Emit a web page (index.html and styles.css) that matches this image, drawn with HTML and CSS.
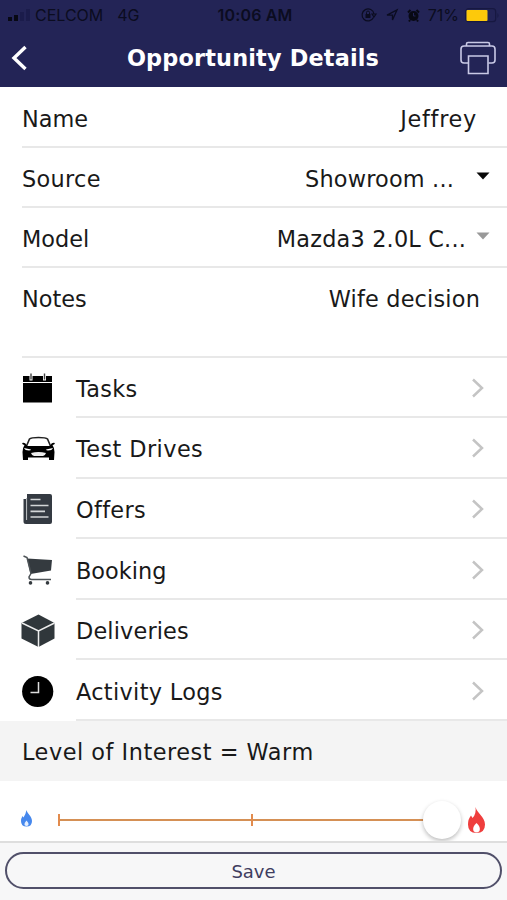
FILE: index.html
```html
<!DOCTYPE html>
<html lang="en">
<head>
<meta charset="utf-8">
<title>Opportunity Details</title>
<link rel="stylesheet" href="styles.css">
</head>
<body>
<header class="header">
  <div class="status">
    <div class="status-left">
      <svg width="22" height="12" viewBox="0 0 22 12"><path d="M0 8h4v4H0zM6 6h4v6H6z" fill="#080914"/><path d="M12 3h4v9h-4zM18 0h4v12h-4z" fill="#1b1c4b"/></svg>
      <span class="carrier">CELCOM</span><span class="network">4G</span>
    </div>
    <span class="time">10:06 AM</span>
    <div class="status-right">
      <svg width="16" height="14" viewBox="0 0 16 14"><path d="M12.500 9.500A6 6 0 1 1 13 6M11 6h4l-2 3z" fill="none" stroke="#0b0c20" stroke-width="1.200"/><path d="M4.500 6h5v4h-5z" fill="#0b0c20"/><path d="M5.500 6V4.500a1.500 1.500 0 0 1 3 0V6" fill="none" stroke="#0b0c20"/></svg>
      <svg class="locate" width="12" height="12" viewBox="0 0 12 12"><path d="M1 6.200 11 1 6.500 11V6.200z" fill="none" stroke="#0b0c20" stroke-width="1.300"/></svg>
      <svg class="alarm" width="13" height="13" viewBox="0 0 13 13"><circle cx="6.500" cy="7" r="5" fill="#080914"/><path d="M1 3.500 3.500 1M12 3.500 9.500 1M3 11l-1 1.500M10 11l1 1.500" stroke="#080914" stroke-width="2"/><path d="M6.500 4v3h2" fill="none" stroke="#232456"/></svg>
      <span class="percent">71%</span>
      <svg class="battery" width="35" height="15" viewBox="0 0 35 15"><rect x=".7" y=".7" width="30" height="13" rx="3" fill="none" stroke="#171841" stroke-width="1.200"/><rect x="1.500" y="2" width="21" height="11" rx="1" fill="#fdc90b"/><path d="M32.500 5v5q2-2.500 0-5" fill="#171841"/></svg>
    </div>
  </div>
  <div class="nav">
    <svg class="back" width="18" height="28" viewBox="0 0 18 28"><path d="M14.500 3 3 14 14.500 25" fill="none" stroke="#fff" stroke-width="3.400"/></svg>
    <h1 class="title">Opportunity Details</h1>
    <svg class="printer" width="36" height="34" viewBox="0 0 36 34" fill="none" stroke="#c9c9e6" stroke-width="1.600"><path d="M6.500 5V3q0-1.500 1.500-1.500h20q1.500 0 1.500 1.500v2M8 22H4q-3 0-3-3V8q0-3 3-3h28q3 0 3 3v11q0 3-3 3h-3.500"/><path d="M8.500 15h19.500v17.500H8.500z"/></svg>
  </div>
</header>
<main>
  <section class="fields">
    <div class="field"><span>Name</span><span class="value name">Jeffrey</span></div>
    <div class="field"><span class="loose">Source</span><span class="value source">Showroom ...</span><svg class="caret" width="14" height="8" viewBox="0 0 14 8"><path d="M.5.500h13L7 7.500z" fill="#080808"/></svg></div>
    <div class="field"><span>Model</span><span class="value model">Mazda3 2.0L C...</span><svg class="caret" width="14" height="8" viewBox="0 0 14 8"><path d="M.5.500h13L7 7.500z" fill="#999"/></svg></div>
    <div class="field notes"><span>Notes</span><span class="value note">Wife decision</span></div>
  </section>
  <nav class="links">
    <div class="link">
      <svg class="icon" width="34" height="34" viewBox="0 0 34 34"><path d="M1 4h29v6H1zM1 11h29v19.500H1z" fill="#000"/><path d="M9 1.500v7M22.500 1.500v7" stroke="#fff" stroke-width="3"/><path d="M9 1.500v6M22.500 1.500v6" stroke="#444" stroke-width="1.400"/></svg>
      <div class="link-body"><span class="loose">Tasks</span><svg class="chevron" width="14" height="20" viewBox="0 0 14 20"><path d="m2 1.500 9 8.500-9 8.500"/></svg></div>
    </div>
    <div class="link">
      <svg class="icon" width="34" height="34" viewBox="0 0 34 34"><path d="M4.500 14 7.500 7Q9 5.500 16.500 5.500T25.500 7l3 7" fill="none" stroke="#222" stroke-width="1.600"/><path d="M0 11q3-1 4.500 2l1 1h22l1-1q1.500-3 4.500-2-.5 2-2.500 2 2 3 2 7l-.5 8h-5v-2.500H6V28H1l-.5-8q0-4 2-7Q.5 13 0 11z" fill="#000"/><path d="m2 16 7 1.500q0 1-2 1-4 0-5-2.500zm29 0-7 1.500q0 1 2 1 4 0 5-2.500z" fill="#fff"/><path d="M9 21q7.500-2 15 0-1 3-3 3h-9q-2 0-3-3z" fill="#eee"/></svg>
      <div class="link-body"><span class="looser">Test Drives</span><svg class="chevron" width="14" height="20" viewBox="0 0 14 20"><path d="m2 1.500 9 8.500-9 8.500"/></svg></div>
    </div>
    <div class="link">
      <svg class="icon" width="34" height="34" viewBox="0 0 34 34"><path d="M5 1h23q2 0 2 2v26q0 2-2 2H4q-2.500 0-2.500-2.500V6H4v21h1z" fill="#343a42"/><path d="M4.600 5v22" stroke="#aeb2b6" stroke-width="1"/><path d="M8.500 6.500h10M8.500 12.500h18M8.500 18.300h14.500M8.500 24h18" stroke="#d3d6d8" stroke-width="1.700"/></svg>
      <div class="link-body"><span class="loose">Offers</span><svg class="chevron" width="14" height="20" viewBox="0 0 14 20"><path d="m2 1.500 9 8.500-9 8.500"/></svg></div>
    </div>
    <div class="link">
      <svg class="icon" width="34" height="34" viewBox="0 0 34 34"><path d="M5 4.500 30 6 29 16.500 8.500 20z" fill="#343a3f"/><path d="M1.500 2 5 3.500l4 16-2 3.500q0 2.500 2.500 2.500H29" fill="none" stroke="#4d5357" stroke-width="1.500"/><circle cx="8.500" cy="28.900" r="1.800" fill="#343a3f"/><circle cx="25.500" cy="28.900" r="1.800" fill="#343a3f"/></svg>
      <div class="link-body"><span>Booking</span><svg class="chevron" width="14" height="20" viewBox="0 0 14 20"><path d="m2 1.500 9 8.500-9 8.500"/></svg></div>
    </div>
    <div class="link">
      <svg class="icon" width="34" height="34" viewBox="0 0 34 34"><path d="m16.500.5 16 8.500v15.500l-16 8.500-17-8.500V9z" fill="#30373b"/><path d="m0 9 16.500 8L32.500 9M16.500 17v16" fill="none" stroke="#eee" stroke-width="1.500"/></svg>
      <div class="link-body"><span class="slight">Deliveries</span><svg class="chevron" width="14" height="20" viewBox="0 0 14 20"><path d="m2 1.500 9 8.500-9 8.500"/></svg></div>
    </div>
    <div class="link">
      <svg class="icon" width="34" height="34" viewBox="0 0 34 34"><circle cx="15.700" cy="16.500" r="15.600" fill="#000"/><path d="M16.500 7v10.500H8.500" fill="none" stroke="#ddd" stroke-width="1.500"/></svg>
      <div class="link-body"><span class="loose">Activity Logs</span><svg class="chevron" width="14" height="20" viewBox="0 0 14 20"><path d="m2 1.500 9 8.500-9 8.500"/></svg></div>
    </div>
  </nav>
  <div class="interest"><span>Level of Interest = Warm</span></div>
  <div class="slider">
    <svg class="cold" width="12" height="17" viewBox="0 0 12 17"><path d="M5.500 0C6 3.500 11 6 11 11q0 5.500-5.500 5.500T0 11q0-2.500 1.500-5l1 1.500Q4.500 5 5.500 0z" fill="#4688ed"/><path d="M5.500 10.500Q8 13 7.500 15q-2 2-4 0Q3 13 5.500 10.500z" fill="#e5efff"/></svg>
    <div class="track"><i></i><i></i><b class="thumb"></b></div>
    <svg class="hot" width="18" height="27" viewBox="0 0 18 27"><path d="M7.500 0C9 6 17 10 17 17.500q0 8.500-8.500 8.500T0 17.500Q0 12 3 8.500L4.500 11Q8.500 7 7.500 0z" fill="#ef3e3d"/><path d="M8.500 16q4.500 4 3 8-3 3-6 0-1.500-4 3-8z" fill="#fff"/></svg>
  </div>
</main>
<footer class="footer"><button class="save">Save</button></footer>
</body>
</html>
```
FILE: styles.css
```css
* { box-sizing: border-box; }
body {
  margin: 0;
  width: 507px;
  height: 900px;
  overflow: hidden;
  display: flex;
  flex-direction: column;
  background: #fff;
  color: #191919;
  font: 22.4px/30px "DejaVu Sans", sans-serif;
}
svg { display: block; flex: none; overflow: visible; }
.header { height: 87px; background: #232456; color: #fff; }
.status {
  height: 29px;
  display: grid;
  grid-template-columns: 1fr auto 1fr;
  align-items: center;
  padding: 1px 7px 0 8px;
  color: #0b0c20;
  font: 16px/20px Inter, sans-serif;
}
.status-left, .status-right { display: flex; align-items: center; }
.status-right { justify-content: flex-end; }
.carrier { margin-left: 5px; }
.network { margin-left: 14px; }
.time { font-weight: 600; padding-left: 2px; letter-spacing: 0.15px; }
.locate { margin-left: 9px; }
.alarm { margin-left: 9px; }
.percent { margin-left: 8px; }
.battery { margin-left: 6px; }
.nav { height: 58px; display: flex; align-items: center; padding: 0 11px 0 11px; }
.title {
  flex: 1;
  margin: 0 0 0 17px;
  text-align: center;
  font: bold 22.4px/30px "DejaVu Sans", sans-serif;
  letter-spacing: 0.16px;
}
.fields { height: 270.500px; margin-left: 22px; padding-top: 1px; }
.field {
  height: 60px;
  display: flex;
  align-items: center;
  padding-top: 4px;
  border-bottom: 2px solid #e8e8e8;
}
.slight { letter-spacing: 0.15px; }
.loose { letter-spacing: 0.32px; }
.looser { letter-spacing: 0.42px; }
.value { margin-left: auto; letter-spacing: 0.18px; }
.name { margin-right: 30px; letter-spacing: 0.7px; }
.note { margin-right: 27px; }
.source { margin-right: 22px; }
.model { margin-right: 10px; }
.caret { margin: 0 17px 6px 0; }
.notes { height: 89.500px; align-items: flex-start; padding-top: 16px; }
.link { height: 60.600px; display: flex; align-items: center; padding-left: 22px; }
.icon { margin: 2px 20px 0 0; }
.link-body {
  flex: 1;
  height: 100%;
  display: flex;
  align-items: center;
  justify-content: space-between;
  padding: 4px 22px 0 0;
  border-bottom: 2px solid #e8e8e8;
}
.chevron { fill: none; stroke: #c4c4c4; stroke-width: 2.500; margin-bottom: 2px; }
.interest { height: 60px; background: #f4f4f4; padding: 16px 22px 0; letter-spacing: 0.52px; }
.slider { height: 60px; display: flex; align-items: center; padding: 0 21px; }
.cold { margin-top: 15px; }
.track {
  width: 387px;
  height: 12px;
  margin: 18px 0 0 25px;
  display: flex;
  position: relative;
  background: linear-gradient(#d59055, #d59055) 0 5px / 100% 2px no-repeat;
}
.track i { width: 2px; height: 12px; margin-right: 191px; background: #e28b4d; }
.thumb {
  position: absolute;
  left: 365px;
  top: -13px;
  width: 38px;
  height: 38px;
  border-radius: 50%;
  background: #fff;
  box-shadow: 0 2px 4px #0004;
}
.hot { margin: 18px 0 0 23px; }
.footer { position: relative; height: 59px; padding: 9px 5px 0; background: #f7f7f8; border-top: 2px solid #dedede; }
.save {
  display: block;
  width: 497px;
  height: 37px;
  padding: 2px 0 0;
  border: 2px solid #51506a;
  border-radius: 19px;
  background: #f7f7f8;
  color: #3f3d60;
  font: 18px/24px "DejaVu Sans", sans-serif;
}
```
